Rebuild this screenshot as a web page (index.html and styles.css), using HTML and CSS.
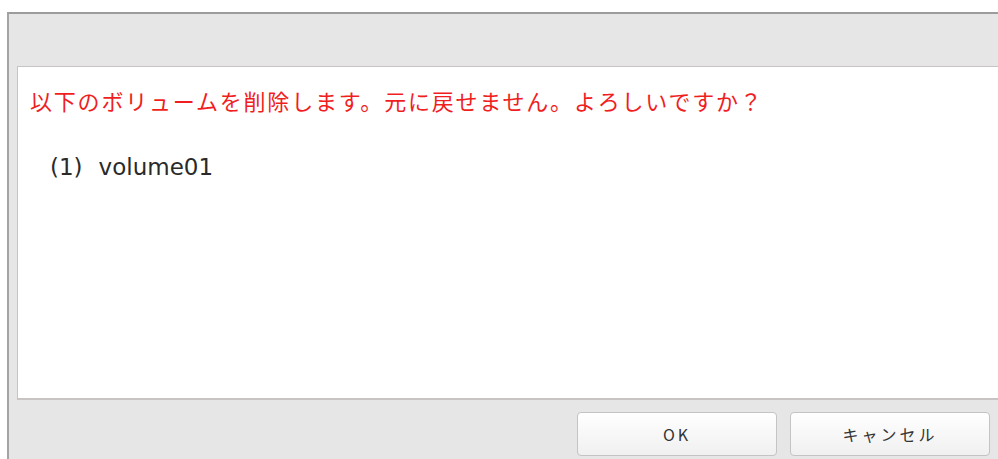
FILE: index.html
```html
<!DOCTYPE html>
<html lang="ja">
<head>
  <meta charset="UTF-8">
  <title>ボリューム削除</title>
  <link rel="stylesheet" href="styles.css">
</head>
<body>

<div class="dialog">
  <div class="dialog-title"></div>
  <div class="dialog-body">
    <p class="warn">以下のボリュームを削除します。元に戻せません。よろしいですか？</p>
    <ul class="vol-list">
      <li><span class="num">(1)</span>volume01</li>
    </ul>
  </div>
  <div class="dialog-footer">
    <button class="btn">OK</button>
    <button class="btn">キャンセル</button>
  </div>
</div>

</body>
</html>
```

FILE: styles.css
```css
body {
  margin: 0;
  background-color: #fff;
  font-family: "DejaVu Sans", "Noto Sans CJK JP", sans-serif;
}
.dialog {
  margin: 12px 0 0 7px;
  height: 447px;
  background-color: #e6e6e6;
  border-top: 2px solid #9c9c9c;
  border-left: 2px solid #a4a4a4;
  box-sizing: border-box;
  display: flex;
  flex-direction: column;
}
.dialog-title {
  height: 52px;
}
.dialog-body {
  margin-left: 8px;
  height: 334px;
  background-color: #fff;
  border-top: 1px solid #c8c4c4;
  border-left: 1px solid #c8c4c4;
  border-bottom: 2px solid #c8c4c4;
  box-sizing: border-box;
  padding: 18px 0 0 12px;
}
.warn {
  margin: 0;
  color: #f01e1e;
  font-family: "Noto Sans CJK JP", sans-serif;
  font-size: 22px;
  letter-spacing: 1.8px;
  line-height: 30px;
}
.vol-list {
  list-style: none;
  margin: 37px 0 0 0;
  padding: 0 0 0 20px;
  color: #2a2a2a;
  font-size: 23px;
  line-height: 30px;
}
.num {
  margin-right: 16px;
}
.dialog-footer {
  display: flex;
  justify-content: flex-end;
  gap: 13px;
  padding: 12px 8px 0 0;
}
.btn {
  width: 200px;
  height: 44px;
  border: 1px solid #c4c4c4;
  border-radius: 4px;
  background: linear-gradient(#ffffff, #f0f0f0);
  font-family: "Noto Sans CJK JP", sans-serif;
  font-size: 16px;
  letter-spacing: 3px;
  color: #333;
}
```
